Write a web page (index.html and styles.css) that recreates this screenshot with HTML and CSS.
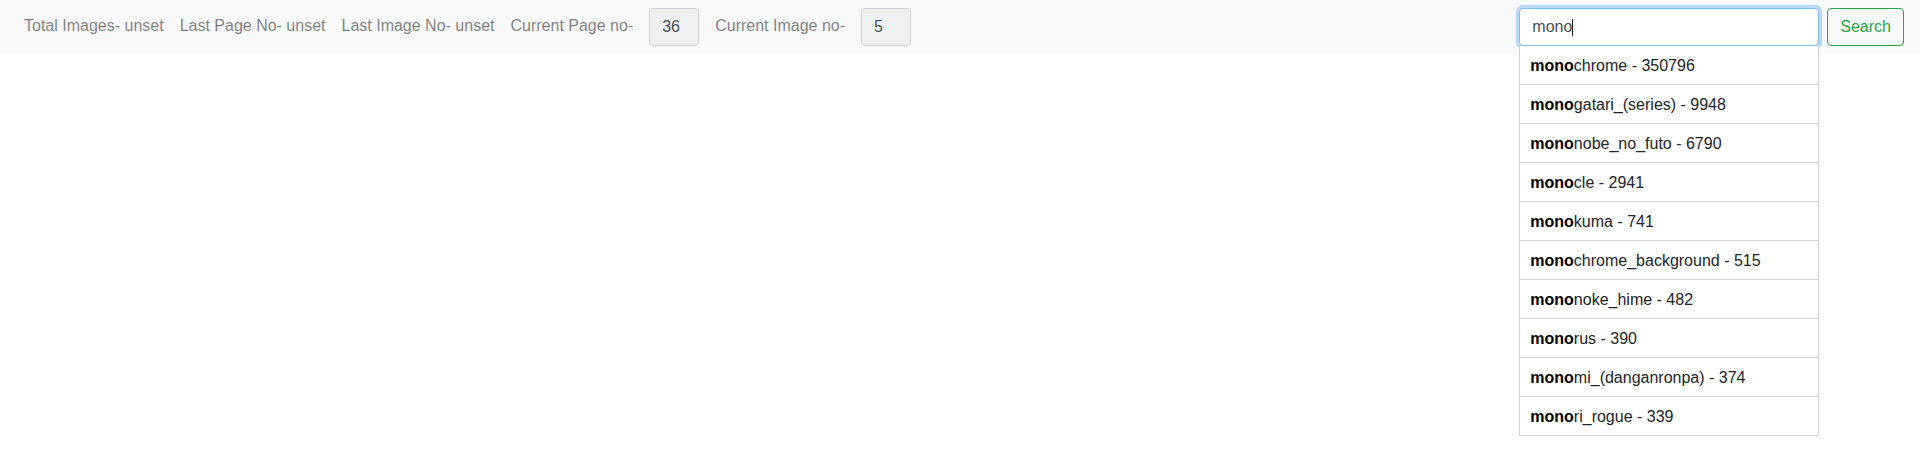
FILE: index.html
```html
<!DOCTYPE html>
<html lang="en">
<head>
<meta charset="utf-8">
<title>Images</title>
<link rel="stylesheet" href="styles.css">
</head>
<body>
<nav class="navbar">
  <ul class="nav-list">
    <li class="nav-link">Total Images- unset</li>
    <li class="nav-link">Last Page No- unset</li>
    <li class="nav-link">Last Image No- unset</li>
    <li class="nav-item">
      <span class="nav-link">Current Page no-</span>
      <input class="num-input" type="text" value="36" readonly>
    </li>
    <li class="nav-item">
      <span class="nav-link">Current Image no-</span>
      <input class="num-input" type="text" value="5" readonly>
    </li>
  </ul>
  <form class="search-form">
    <div class="autocomplete">
      <input class="search-input focused" type="text" value="mono" autofocus>
      <span class="caret"></span>
      <div class="autocomplete-items">
        <div class="ac-item"><strong>mono</strong>chrome - 350796</div>
        <div class="ac-item"><strong>mono</strong>gatari_(series) - 9948</div>
        <div class="ac-item"><strong>mono</strong>nobe_no_futo - 6790</div>
        <div class="ac-item"><strong>mono</strong>cle - 2941</div>
        <div class="ac-item"><strong>mono</strong>kuma - 741</div>
        <div class="ac-item"><strong>mono</strong>chrome_background - 515</div>
        <div class="ac-item"><strong>mono</strong>noke_hime - 482</div>
        <div class="ac-item"><strong>mono</strong>rus - 390</div>
        <div class="ac-item"><strong>mono</strong>mi_(danganronpa) - 374</div>
        <div class="ac-item"><strong>mono</strong>ri_rogue - 339</div>
      </div>
    </div>
    <button class="btn-search" type="button">Search</button>
  </form>
</nav>
</body>
</html>
```
FILE: styles.css
```css
* { box-sizing: border-box; }

html {
  height: 100%;
}

body {
  margin: 0;
  min-height: 100%;
  font-family: "Liberation Sans", Arial, sans-serif;
  font-size: 16px;
  line-height: 1.5;
  color: #212529;
  background: #fff;
}

.navbar {
  display: flex;
  align-items: center;
  justify-content: space-between;
  padding: 8px 16px;
  background: #f8f9fa;
}

.nav-list {
  display: flex;
  align-items: center;
  list-style: none;
  margin: 0;
  padding: 0;
}

.nav-item {
  display: flex;
  align-items: center;
}

.nav-link {
  display: block;
  padding: 5px 8px 8px;
  color: rgba(0, 0, 0, 0.5);
  white-space: nowrap;
}

.num-input {
  width: 50px;
  height: 38px;
  margin: 0 8px;
  padding: 6px 12px;
  font: inherit;
  color: #495057;
  background: #eff0f1;
  border: 1px solid #ced4da;
  border-radius: 4px;
  outline: none;
}

.search-form {
  display: flex;
  align-items: center;
}

.autocomplete {
  position: relative;
  width: 300px;
}

.search-input {
  display: block;
  width: 100%;
  height: 38px;
  padding: 6px 12px;
  font: inherit;
  color: #495057;
  background: #fff;
  border: 1px solid #ced4da;
  border-radius: 4px;
  outline: none;
  caret-color: #000;
}

.search-input.focused {
  border-color: #80bdff;
  box-shadow: 0 0 0 3.2px rgba(0, 123, 255, 0.25);
}

.caret {
  position: absolute;
  left: 53px;
  top: 11px;
  width: 1px;
  height: 17px;
  background: #222;
  pointer-events: none;
}

.autocomplete-items {
  position: absolute;
  top: 100%;
  left: 0;
  right: 0;
  z-index: 99;
  border: 1px solid #d4d4d4;
  border-top: none;
  border-bottom: none;
}

.ac-item {
  padding: 11px 10px 9px;
  line-height: normal;
  color: #212529;
  background: #fff;
  border-bottom: 1px solid #d4d4d4;
  white-space: nowrap;
}

.ac-item strong {
  font-weight: bold;
  color: #000;
}

.btn-search {
  margin-left: 8px;
  height: 38px;
  padding: 6px 12px;
  font: inherit;
  color: #28a745;
  background: transparent;
  border: 1px solid #28a745;
  border-radius: 4px;
  cursor: pointer;
}
```
